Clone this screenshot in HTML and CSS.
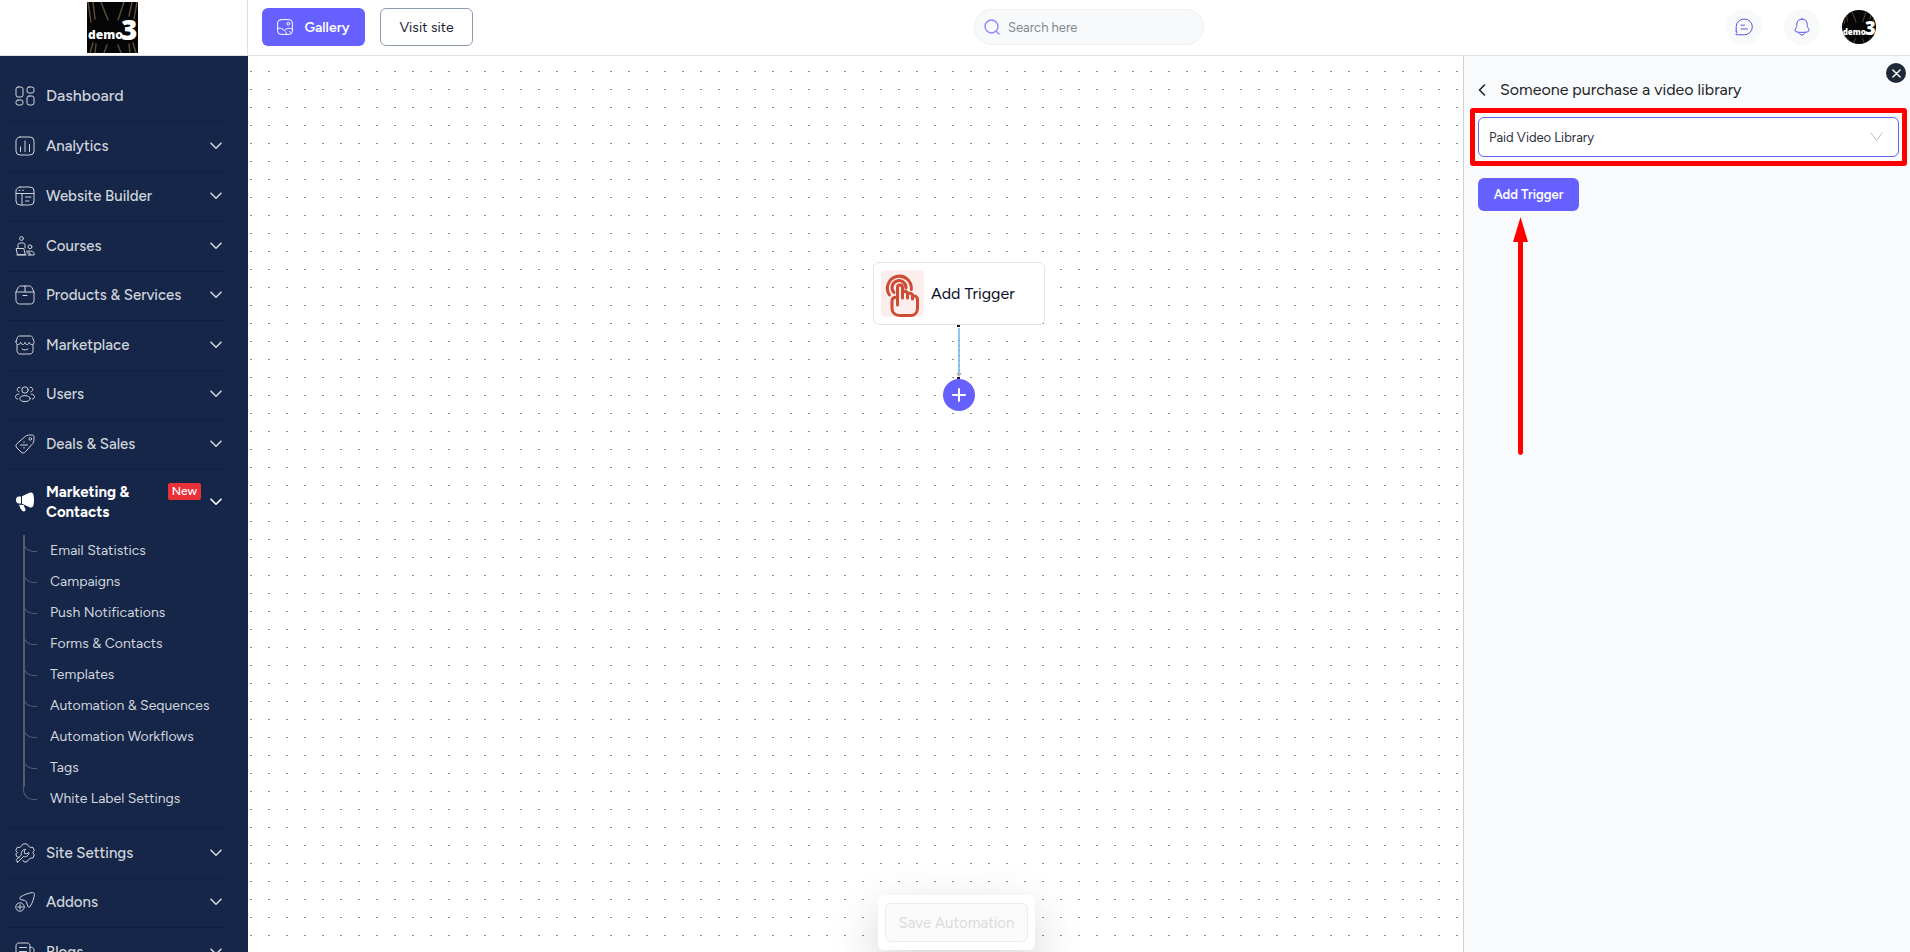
FILE: index.html
```
<!DOCTYPE html>
<html lang="en">
<head>
  <meta charset="UTF-8">
  <meta name="viewport" content="width=device-width, initial-scale=1.0">
  <title>Automation Workflows</title>
  <link rel="stylesheet" href="styles.css">
</head>
<body>
  <!-- Shared icons -->
  <svg class="sprite" aria-hidden="true">
    <symbol id="chevron" viewBox="0 0 12 8"><path d="M1 1.2l5 5 5-5"/></symbol>
    <symbol id="logo-back" viewBox="0 0 51 51">
      <rect width="51" height="51" fill="#050505" stroke="none"/>
      <g fill="none" stroke="#5d4e3c" stroke-width="1.4">
        <path d="M1 0l3 20M6 0l2 17M14 0l7 18M37 0l-6 18M45 0l-3 14M50 0l-3 17"/>
        <path d="M3 51l3-10M8 51l1-9M17 51l3-8M34 51l-3-8M43 51l-1-9M49 51l-3-10"/>
      </g>
    </symbol>
  </svg>

  <!-- Header -->
  <header class="header">
    <a class="brand" href="#">
      <svg class="brand-logo" viewBox="0 0 51 51"><use href="#logo-back"/><text x="1" y="37" class="logo-word">demo</text><text x="34" y="38" class="logo-number">3</text></svg>
    </a>
    <div class="topbar">
      <div class="topbar-actions">
        <button class="btn btn-gallery" type="button">
          <svg class="icon-16" viewBox="0 0 16 16">
            <rect x=".6" y=".6" width="14.8" height="14.8" rx="3.4"/>
            <circle cx="11.3" cy="4.7" r="1.4"/>
            <path d="M.8 9.2c3.5-.6 7.5 1.6 9 6M8 11c2-2 4.5-2.3 7.2-1M12.5 12.4l1 1"/>
          </svg>
          Gallery
        </button>
        <a class="btn btn-visit" href="#">Visit site</a>
      </div>
      <label class="search">
        <svg class="icon-16" viewBox="0 0 16 16"><circle cx="7.5" cy="7.5" r="6.5"/><path d="M12.2 12.2l2.8 2.8"/></svg>
        <input type="search" placeholder="Search here" aria-label="Search">
      </label>
      <div class="topbar-user">
        <button class="round-btn" type="button" aria-label="Messages">
          <svg class="icon-18" viewBox="0 0 18 18">
            <path d="M1.2 13.2V8.8a7.800 7.800 0 0 1 7.800-7.800h.4a7.600 7.600 0 0 1 0 15.800H1.800c-.9 0-1-.7-.5-1.300.8-.8.6-1.500-.1-2.300zM6 7.200h3.500M6 11h6.500"/>
          </svg>
        </button>
        <button class="round-btn" type="button" aria-label="Notifications">
          <svg class="icon-18" viewBox="0 0 18 18">
            <path d="M9 1C5.800 1 3.800 3.300 3.800 6c0 2.300-.3 3.300-1.300 4.700C1.300 12.500 2 13.800 4 14c3.300.5 6.700.5 10 0 2-.2 2.700-1.500 1.500-3.300-1-1.400-1.300-2.400-1.300-4.700C14.200 3.300 12.200 1 9 1zM6 14.600c.6 1.600 1.600 2.400 3 2.400s2.400-.8 3-2.400"/>
          </svg>
        </button>
        <button class="avatar" type="button" aria-label="Account">
          <svg viewBox="0 0 51 51"><use href="#logo-back"/><text x="1" y="37" class="logo-word">demo</text><text x="34" y="38" class="logo-number">3</text></svg>
        </button>
      </div>
    </div>
  </header>

  <div class="layout">
    <!-- Sidebar -->
    <nav class="sidebar">
      <ul class="menu">
        <li class="menu-item">
          <a class="menu-link menu-home" href="#">
            <svg class="menu-icon" viewBox="0 0 20 20"><rect x="1" y="1" width="7" height="10" rx="2"/><rect x="12" y="1" width="7" height="6" rx="2"/><rect x="1" y="14" width="7" height="5" rx="2"/><rect x="12" y="10" width="7" height="9" rx="2"/></svg>
            <span class="menu-text">Dashboard</span>
          </a>
        </li>
        <li class="menu-item">
          <a class="menu-link" href="#">
            <svg class="menu-icon" viewBox="0 0 20 20"><rect x="1" y="1" width="18" height="18" rx="4"/><path d="M5.500 11v4.500M10 5v10.500M14.500 8.500v7"/></svg>
            <span class="menu-text">Analytics</span>
            <svg class="chevron"><use href="#chevron"/></svg>
          </a>
        </li>
        <li class="menu-item">
          <a class="menu-link" href="#">
            <svg class="menu-icon" viewBox="0 0 20 20"><rect x="1" y="1" width="18" height="18" rx="4"/><path d="M1 7.500h18M7 7.500V19M10.500 11h5.500M10.500 15h3.500M4 4.300h1M7.500 4.300h1"/></svg>
            <span class="menu-text">Website Builder</span>
            <svg class="chevron"><use href="#chevron"/></svg>
          </a>
        </li>
        <li class="menu-item">
          <a class="menu-link" href="#">
            <svg class="menu-icon" viewBox="0 0 20 20"><circle cx="6.500" cy="2.500" r="1.900"/><path d="M3 12V8.800C3 7.600 4 7 5 7h3c1.200 0 2 .7 2 1.800V12M1.500 12.500h7.300l1.500 6.200H2.800zM2 19h9"/><circle cx="15" cy="10.800" r="1.900"/><path d="M11.500 15.200h4.800c2 0 2.900 1.200 2.900 3.800h-6M12 17h3v2"/></svg>
            <span class="menu-text">Courses</span>
            <svg class="chevron"><use href="#chevron"/></svg>
          </a>
        </li>
        <li class="menu-item">
          <a class="menu-link" href="#">
            <svg class="menu-icon" viewBox="0 0 20 20"><path d="M1 7l2-4.300C3.600 1.500 4.500 1 5.700 1h8.600c1.200 0 2.100.5 2.700 1.700L19 7v8.500c0 2-1.500 3.500-3.500 3.500h-11C2.500 19 1 17.500 1 15.500zM1 7h18M10 1v6M8 10.500h4"/></svg>
            <span class="menu-text">Products &amp; Services</span>
            <svg class="chevron"><use href="#chevron"/></svg>
          </a>
        </li>
        <li class="menu-item">
          <a class="menu-link" href="#">
            <svg class="menu-icon" viewBox="0 0 20 20"><path d="M2 9.500v6C2 17.500 3.200 19 5 19h10c1.800 0 3-1.500 3-3.500v-6M1 6.500l1.400-4C2.800 1.500 3.500 1 4.500 1h11c1 0 1.700.5 2.100 1.500l1.400 4c.3 1.800-.7 3-2.200 3s-2.300-.8-2.600-2.200c-.4 1.500-1 2.200-2.200 2.200S10.200 8.700 10 7.300C9.700 8.800 9 9.500 7.900 9.500S6.100 8.700 5.700 7.300C5.300 8.700 4.600 9.500 3.200 9.500S.8 8.300 1 6.500zM7 14c1.500 1.300 4.500 1.300 6 0"/></svg>
            <span class="menu-text">Marketplace</span>
            <svg class="chevron"><use href="#chevron"/></svg>
          </a>
        </li>
        <li class="menu-item">
          <a class="menu-link" href="#">
            <svg class="menu-icon" viewBox="0 0 20 20"><circle cx="10" cy="6" r="3.200"/><ellipse cx="10" cy="14.600" rx="5.300" ry="3"/><path d="M5 3.300C3.500 3 2.200 4 2.200 5.500c0 1.200.8 2.100 1.900 2.300M15 3.300c1.500-.3 2.800.7 2.800 2.200 0 1.200-.8 2.100-1.900 2.300M3.800 10C1.300 10.300-.2 12 .6 13.600c.3.700 1 1.200 2 1.500M16.200 10c2.500.3 4 2 3.200 3.600-.3.700-1 1.200-2 1.500"/></svg>
            <span class="menu-text">Users</span>
            <svg class="chevron"><use href="#chevron"/></svg>
          </a>
        </li>
        <li class="menu-item">
          <a class="menu-link" href="#">
            <svg class="menu-icon" viewBox="0 0 20 20"><path d="M10.500 2.200C11.600 1.200 15 .8 17.300 1c1.100.1 1.600.6 1.700 1.700.2 2.300-.2 5.700-1.200 6.800l-7.300 8.200c-1.500 1.600-3 1.700-4.500.3L2 14c-1.500-1.500-1.400-3 .1-4.500zM5.500 11h7M9 7.800v.7M9 13.400v.7"/><circle cx="15.300" cy="4.900" r="1.300"/></svg>
            <span class="menu-text">Deals &amp; Sales</span>
            <svg class="chevron"><use href="#chevron"/></svg>
          </a>
        </li>
        <li class="menu-item active">
          <a class="menu-link" href="#">
            <svg class="menu-icon solid" viewBox="0 0 20 20"><path d="M6 4.500v7H4C2 11.500 1 10 1 8s1-3.500 3-3.500zM7 4.300L14.500.8C17 0 18 .9 18.500 3c.7 3.500.7 6.500 0 10-.5 2.100-1.500 3-4 2.200L7 11.700zM4 12.700l4.500.3 2 4.300c.3 1.700-1.500 2.700-3 1.700C6 18 5 15.500 4 12.700z"/></svg>
            <span class="menu-text">Marketing &amp; Contacts</span>
            <span class="badge">New</span>
            <svg class="chevron"><use href="#chevron"/></svg>
          </a>
          <ul class="submenu">
            <li><a href="#">Email Statistics</a></li>
            <li><a href="#">Campaigns</a></li>
            <li><a href="#">Push Notifications</a></li>
            <li><a href="#">Forms &amp; Contacts</a></li>
            <li><a href="#">Templates</a></li>
            <li><a href="#">Automation &amp; Sequences</a></li>
            <li><a href="#">Automation Workflows</a></li>
            <li><a href="#">Tags</a></li>
            <li><a href="#">White Label Settings</a></li>
          </ul>
        </li>
        <li class="menu-item">
          <a class="menu-link" href="#">
            <svg class="menu-icon" viewBox="0 0 20 20"><path d="M4 14.500l-2.300-.9-.9-2.600L2.300 9.500.8 7.500l1.400-3.200 2.700.1L6.700 2.800 8.200.9h3.600l1.500 2 2 1.500 2.600-.1 1.400 3.200-1.500 2 1.500 2.500-1.400 3-2.500.2-2 1.500-1.500 2.200H9l-1-1.500M2.500 19c-1.300-.2-1.700-1.600-.9-2.500l4.900-4.600c-.8-3 1-5.700 4.200-5.600L9.200 8l.4 2.500 2.400.4 1.800-1.600c.3 3.200-2.500 5-5.500 4.300l-4.500 4.700c-.4.500-.8.700-1.300.7z"/></svg>
            <span class="menu-text">Site Settings</span>
            <svg class="chevron"><use href="#chevron"/></svg>
          </a>
        </li>
        <li class="menu-item">
          <a class="menu-link" href="#">
            <svg class="menu-icon" viewBox="0 0 20 20"><path d="M5.500 7.500C4.300 6.800 4.500 5.300 5.800 4.700 9.500 2.500 13.500 1 17.500.6c1.300 0 2 .6 1.900 1.900-.4 4-1.900 8-4.100 11.700-.7 1.200-2 1.300-2.600.1L11.500 10c-.3-.8-.7-1.200-1.500-1.500z"/><circle cx="5" cy="15" r="4.200"/><path d="M5 12.700v4.600M2.700 15h4.600"/></svg>
            <span class="menu-text">Addons</span>
            <svg class="chevron"><use href="#chevron"/></svg>
          </a>
        </li>
        <li class="menu-item">
          <a class="menu-link" href="#">
            <svg class="menu-icon" viewBox="0 0 20 20"><path d="M15 16.500V4c0-1.800-1-3-3-3H4C2 1 1 2.200 1 4v12c0 2 1 3 3 3h12.500c1.500 0 2.500-1 2.500-2.500V8c0-1.500-1-2.500-2.500-2.500H15M4.500 5.500h7M4.500 9.500h7M4.500 13.500h7"/></svg>
            <span class="menu-text">Blogs</span>
            <svg class="chevron"><use href="#chevron"/></svg>
          </a>
        </li>
      </ul>
    </nav>

    <!-- Workflow canvas -->
    <main class="canvas">
      <svg class="canvas-grid" aria-hidden="true">
        <defs>
          <pattern id="dots" x="2" y="15" width="18" height="18" patternUnits="userSpaceOnUse">
            <rect width="2" height="1" fill="#8f8f8f"/>
          </pattern>
        </defs>
        <rect width="100%" height="100%" fill="url(#dots)"/>
      </svg>

      <div class="flow">
        <button class="node" type="button">
          <span class="node-icon">
            <svg viewBox="0 0 43 47">
              <g fill="none" stroke="#cf4b34" stroke-width="3">
                <path d="M8.500 25A12 12 0 1 1 30.300 19.500"/>
                <path d="M13 22.500A7 7 0 1 1 25 18"/>
                <path d="M16.500 35V17.500a2.500 2.500 0 0 1 5 0V28M21.500 22.500c2-2 5-1.200 5 1.500v4M26.500 24c2-1.500 5-.7 5 2v3M31.500 26.500c2.500-1.200 5 .2 5 3V38c0 4.500-3 7.500-7 7.500H19c-5 0-8-3-8-7.500V31c0-2.500 2-4 5.500-4"/>
              </g>
            </svg>
          </span>
          Add Trigger
        </button>
        <svg class="edge" viewBox="0 0 6 54">
          <path d="M3 3v47" stroke="#8cc8f4" stroke-width="2"/>
          <path d="M3 15v33" stroke="#6cb0ea" stroke-width="2" stroke-dasharray="1 4"/>
          <path class="edge-head" d="M0 48h6l-3 4z"/>
          <rect class="handle" x="1" y="0" width="3" height="2"/>
          <rect class="handle" x="1" y="52" width="3" height="2"/>
        </svg>
        <button class="add-step" type="button" aria-label="Add step"><svg viewBox="0 0 14 14"><path d="M7 1v12M1 7h12"/></svg></button>
      </div>

      <div class="save-bar">
        <button class="btn-save" type="button" disabled>Save Automation</button>
      </div>
    </main>

    <!-- Trigger settings -->
    <aside class="panel">
      <button class="panel-close" type="button" aria-label="Close"><svg viewBox="0 0 10 10"><path d="M1 1l8 8M9 1L1 9"/></svg></button>
      <div class="panel-head">
        <button class="panel-back" type="button" aria-label="Back"><svg viewBox="0 0 8 12"><path d="M6.500 1l-5 5 5 5"/></svg></button>
        <h2>Someone purchase a video library</h2>
      </div>
      <div class="highlight">
        <div class="select-wrap">
          <select aria-label="Video library">
            <option>Paid Video Library</option>
          </select>
          <svg viewBox="0 0 13 10"><path d="M.8.8l5.700 7.700L12.200.8"/></svg>
        </div>
      </div>
      <div class="panel-action">
        <button class="btn-trigger" type="button">Add Trigger</button>
        <svg class="arrow" viewBox="0 0 15 238"><path d="M7.500 0L15 25H10v210.500a2.500 2.500 0 0 1-5 0V25H0z"/></svg>
      </div>
    </aside>
  </div>
</body>
</html>
```
FILE: styles.css
```
* {
  box-sizing: border-box;
}

body {
  margin: 0;
  height: 100vh;
  display: flex;
  flex-direction: column;
  overflow: hidden;
  font-family: Figtree, Lato, sans-serif;
  font-size: 16px;
  color: #212529;
  background: #fff;
}

button,
input,
select {
  font-family: inherit;
}

button {
  padding: 0;
  border: none;
  cursor: pointer;
}

a {
  text-decoration: none;
}

ul {
  list-style: none;
  margin: 0;
  padding: 0;
}

svg {
  display: block;
  flex-shrink: 0;
  fill: none;
  stroke: currentColor;
  stroke-linecap: round;
  stroke-linejoin: round;
}

.sprite {
  position: absolute;
  width: 0;
  height: 0;
}

.icon-16 {
  width: 16px;
  height: 16px;
}

.icon-18 {
  width: 18px;
  height: 18px;
}

/* Header */
.header {
  display: flex;
  flex-shrink: 0;
  height: 56px;
  border-bottom: 1px solid #dee0e3;
}

.brand {
  display: flex;
  align-items: center;
  justify-content: center;
  width: 248px;
  padding-right: 23px;
  border-right: 1px solid #dee0e3;
}

.brand-logo {
  width: 51px;
  height: 51px;
}

.logo-word,
.logo-number {
  font-family: "Open Sans", sans-serif;
  font-weight: 800;
  fill: #fff;
  stroke: none;
}

.logo-word {
  font-size: 12px;
}

.logo-number {
  font-size: 28px;
}

.topbar {
  display: flex;
  flex: 1;
  align-items: center;
  justify-content: space-between;
  padding: 0 34px 1px 14px;
}

.topbar-actions {
  display: flex;
  gap: 15px;
}

.btn {
  display: flex;
  align-items: center;
  justify-content: center;
  height: 38px;
  border-radius: 6px;
  font-size: 14px;
}

.btn-gallery {
  gap: 11px;
  width: 103px;
  color: #fff;
  font-weight: 600;
  background: #6660ff;
}

.btn-visit {
  width: 93px;
  color: #1b2238;
  border: 1px solid #8f9bb3;
}

.search {
  display: flex;
  align-items: center;
  gap: 8px;
  width: 230px;
  height: 36px;
  padding: 0 9px;
  border: 1px solid #eceef0;
  border-radius: 18px;
  color: #8a86ff;
  background: #f8f9fb;
}

.search .icon-16 {
  stroke-width: 1.4;
}

.search input {
  flex: 1;
  min-width: 0;
  padding: 0;
  border: none;
  outline: none;
  font-size: 13px;
  background: none;
}

.search input::placeholder {
  color: #85898e;
}

.topbar-user {
  display: flex;
  align-items: center;
  gap: 22px;
  padding-left: 21px;
}

.round-btn {
  display: flex;
  align-items: center;
  justify-content: center;
  width: 36px;
  height: 36px;
  border-radius: 50%;
  color: #5a54e8;
  background: #f8f9fb;
}

.avatar {
  width: 34px;
  height: 34px;
  border-radius: 50%;
  overflow: hidden;
}

/* Sidebar */
.layout {
  display: flex;
  flex: 1;
  min-height: 0;
}

.sidebar {
  width: 248px;
  padding: 16px 20px 0 5px;
  overflow: hidden;
  color: #d0d4db;
  background: #152649;
}

.menu-item {
  border-bottom: 1px solid #10203f;
}

.menu-link {
  display: flex;
  align-items: center;
  height: 49px;
  padding: 0 6px 2px 10px;
  color: inherit;
  font-size: 15px;
  font-weight: 500;
  line-height: 20px;
}

.menu-item:nth-child(2n + 5) .menu-link {
  height: 48px;
}

.menu-link.menu-home {
  font-size: 16px;
}

.menu-icon {
  width: 20px;
  height: 20px;
  margin-right: 11px;
}

.menu-icon.solid {
  fill: currentColor;
  stroke: none;
}

.menu-text {
  flex: 1;
}

.chevron {
  width: 12px;
  height: 8px;
  stroke-width: 1.6;
}

.menu-item.active {
  padding-bottom: 14px;
}

.menu-item.active .menu-link {
  height: 65px;
  color: #fff;
  font-weight: 700;
}

.badge {
  align-self: flex-start;
  margin: 13px 9px 0 0;
  padding: 0 4px;
  border-radius: 2px;
  font-size: 12px;
  font-weight: 500;
  line-height: 17px;
  background: #ea3138;
}

.submenu {
  position: relative;
  margin-left: 18px;
  font-size: 14px;
}

.submenu::before {
  content: "";
  position: absolute;
  top: 0;
  bottom: 27px;
  width: 2px;
  background: #545c6b;
}

.submenu li {
  position: relative;
  padding-left: 27px;
}

.submenu li::before {
  content: "";
  position: absolute;
  left: 0;
  bottom: 14px;
  width: 13px;
  height: 12px;
  border: solid #545c6b;
  border-width: 0 0 1px 1px;
  border-bottom-left-radius: 10px;
}

.submenu a {
  display: block;
  line-height: 31px;
  color: #d0d4db;
}

/* Canvas */
.canvas {
  position: relative;
  flex: 1;
  overflow: hidden;
}

.canvas-grid {
  position: absolute;
  width: 100%;
  height: 100%;
  stroke: none;
}

.flow {
  position: absolute;
  top: 206px;
  left: 625px;
  display: flex;
  flex-direction: column;
  align-items: center;
}

.node {
  display: flex;
  align-items: center;
  gap: 7px;
  width: 172px;
  height: 63px;
  padding: 0 7px;
  border: 1px solid #dfe3e9;
  border-radius: 6px;
  font-size: 16px;
  color: #0b0f2a;
  background: #fff;
}

.node-icon {
  width: 43px;
  height: 47px;
  border-radius: 5px;
  background: #fbeeec;
}

.edge {
  width: 6px;
  height: 54px;
  stroke-linecap: butt;
}

.edge-head {
  fill: #b1b1b7;
  stroke: none;
}

.handle {
  fill: #1a192b;
  stroke: none;
}

.add-step {
  display: flex;
  align-items: center;
  justify-content: center;
  width: 32px;
  height: 32px;
  border-radius: 50%;
  color: #fff;
  background: #6660ff;
}

.add-step svg {
  width: 14px;
  height: 14px;
  stroke-width: 2;
}

.save-bar {
  position: absolute;
  left: 630px;
  bottom: 2px;
  padding: 8px 7px;
  border-radius: 6px;
  background: #fff;
  box-shadow: 0 16px 48px rgba(0, 0, 0, 0.18);
}

.btn-save {
  width: 143px;
  height: 39px;
  border: 1px solid #ececec;
  border-radius: 6px;
  font-size: 15px;
  color: #dcdcdc;
  background: #fafafa;
}

/* Trigger settings */
.panel {
  position: relative;
  width: 447px;
  padding: 23px 3px 0 6px;
  border-left: 1px solid #ced2d8;
  background: #f9fafc;
}

.panel-close {
  position: absolute;
  top: 7px;
  right: 4px;
  display: flex;
  align-items: center;
  justify-content: center;
  width: 20px;
  height: 20px;
  border-radius: 50%;
  color: #fff;
  background: #1f2838;
}

.panel-close svg {
  width: 9px;
  height: 9px;
  stroke-width: 1.6;
}

.panel-head {
  display: flex;
  align-items: center;
  gap: 14px;
  padding-left: 8px;
  margin-bottom: 7px;
}

.panel-head h2 {
  margin: 0;
  font-size: 16px;
  font-weight: 400;
  line-height: 22px;
}

.panel-back {
  color: #212529;
  background: none;
}

.panel-back svg {
  width: 8px;
  height: 12px;
  stroke-width: 1.6;
}

/* Call-out frame round the select */
.highlight {
  padding: 4px 3px;
  border: 5px solid #f00;
  border-radius: 3px;
}

.select-wrap {
  position: relative;
}

.select-wrap select {
  display: block;
  width: 100%;
  height: 40px;
  padding: 0 10px;
  border: 1px solid #6660ff;
  border-radius: 6px;
  outline: none;
  appearance: none;
  font-size: 13px;
  color: #2b3040;
  background: #fff;
}

.select-wrap svg {
  position: absolute;
  top: 15px;
  right: 16px;
  width: 13px;
  height: 10px;
  color: #bfbfbf;
  pointer-events: none;
}

.panel-action {
  display: flex;
  flex-direction: column;
  align-items: flex-start;
  gap: 6px;
  padding: 12px 8px;
}

.btn-trigger {
  width: 101px;
  height: 33px;
  border-radius: 6px;
  font-size: 13px;
  font-weight: 600;
  color: #fff;
  background: #6660ff;
}

.arrow {
  width: 15px;
  height: 238px;
  margin-left: 35px;
  fill: #f00;
  stroke: none;
}
```
